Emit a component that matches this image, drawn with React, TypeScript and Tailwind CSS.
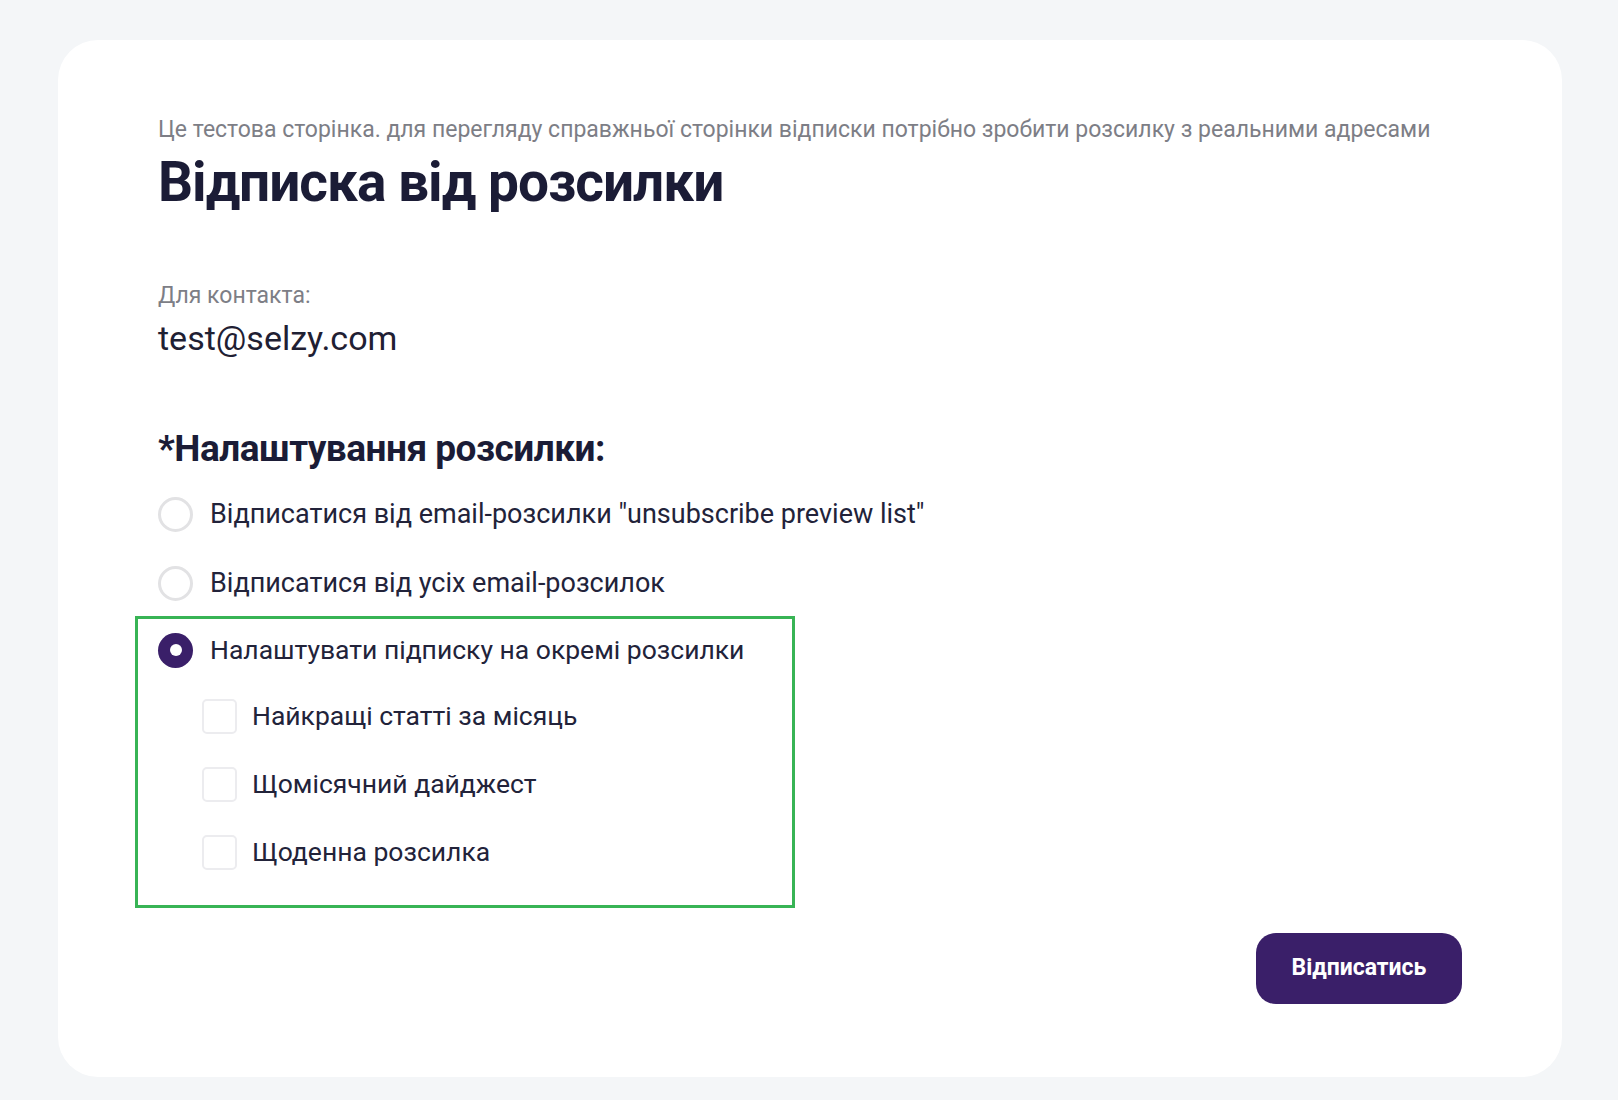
import React from "react";

const font = { fontFamily: 'Roboto, "Noto Sans", sans-serif' };

function Radio({ checked }: { checked?: boolean }) {
  if (checked) {
    return (
      <div className="w-[35px] h-[35px] rounded-full bg-[#3a1f69] flex items-center justify-center shrink-0">
        <div className="w-[12px] h-[12px] rounded-full bg-white" />
      </div>
    );
  }
  return <div className="w-[35px] h-[35px] rounded-full border-[3px] border-[#e2e2e4] bg-white shrink-0" />;
}

function Checkbox() {
  return <div className="w-[35px] h-[35px] rounded-[5px] border-[2px] border-[#ececef] bg-white shrink-0" />;
}

export default function App() {
  return (
    <div className="min-h-[1100px] bg-[#f4f6f8] pt-[40px] pl-[58px] pr-[56px]" style={font}>
      <div className="bg-white rounded-[40px] pt-[76px] pl-[100px] pr-[100px] pb-[73px]">
        <p className="text-[23px] leading-[28px] text-[#7d7e86]">
          Це тестова сторінка. для перегляду справжньої сторінки відписки потрібно зробити розсилку з реальними адресами
        </p>
        <h1 className="mt-[6px] text-[55px] leading-[64px] font-bold tracking-[-1px] text-[#1b1c36]">Відписка від розсилки</h1>

        <p className="mt-[68px] text-[23px] leading-[28px] text-[#7d7e86]">Для контакта:</p>
        <p className="mt-[8px] text-[34px] leading-[40px] text-[#1f2033]">test@selzy.com</p>

        <h2 className="mt-[68px] text-[37px] leading-[46px] font-bold tracking-[-0.5px] text-[#1b1c36]">*Налаштування розсилки:</h2>

        <div className="mt-[24px] flex flex-col gap-[33px]">
          <div className="flex items-center gap-[17px] h-[36px]">
            <Radio />
            <span className="text-[27px] text-[#22233a]">Відписатися від email-розсилки "unsubscribe preview list"</span>
          </div>
          <div className="flex items-center gap-[17px] h-[36px]">
            <Radio />
            <span className="text-[27px] text-[#22233a]">Відписатися від усіх email-розсилок</span>
          </div>
        </div>

        <div className="mt-[15px] -ml-[23px] w-[660px] border-[3px] border-[#38b455] pl-[20px] pt-[13px] pb-[35px]">
          <div className="flex items-center gap-[17px] h-[36px]">
            <Radio checked />
            <span className="text-[26.5px] text-[#22233a]">Налаштувати підписку на окремі розсилки</span>
          </div>
          <div className="mt-[30px] ml-[44px] flex flex-col gap-[32px]">
            {["Найкращі статті за місяць", "Щомісячний дайджест", "Щоденна розсилка"].map((t) => (
              <div key={t} className="flex items-center gap-[15px] h-[36px]">
                <Checkbox />
                <span className="text-[26.5px] text-[#22233a]">{t}</span>
              </div>
            ))}
          </div>
        </div>

        <div className="mt-[25px] flex justify-end">
          <button className="w-[206px] h-[71px] rounded-[20px] bg-[#3a1f69] text-white text-[23px] font-bold">
            Відписатись
          </button>
        </div>
      </div>
    </div>
  );
}
